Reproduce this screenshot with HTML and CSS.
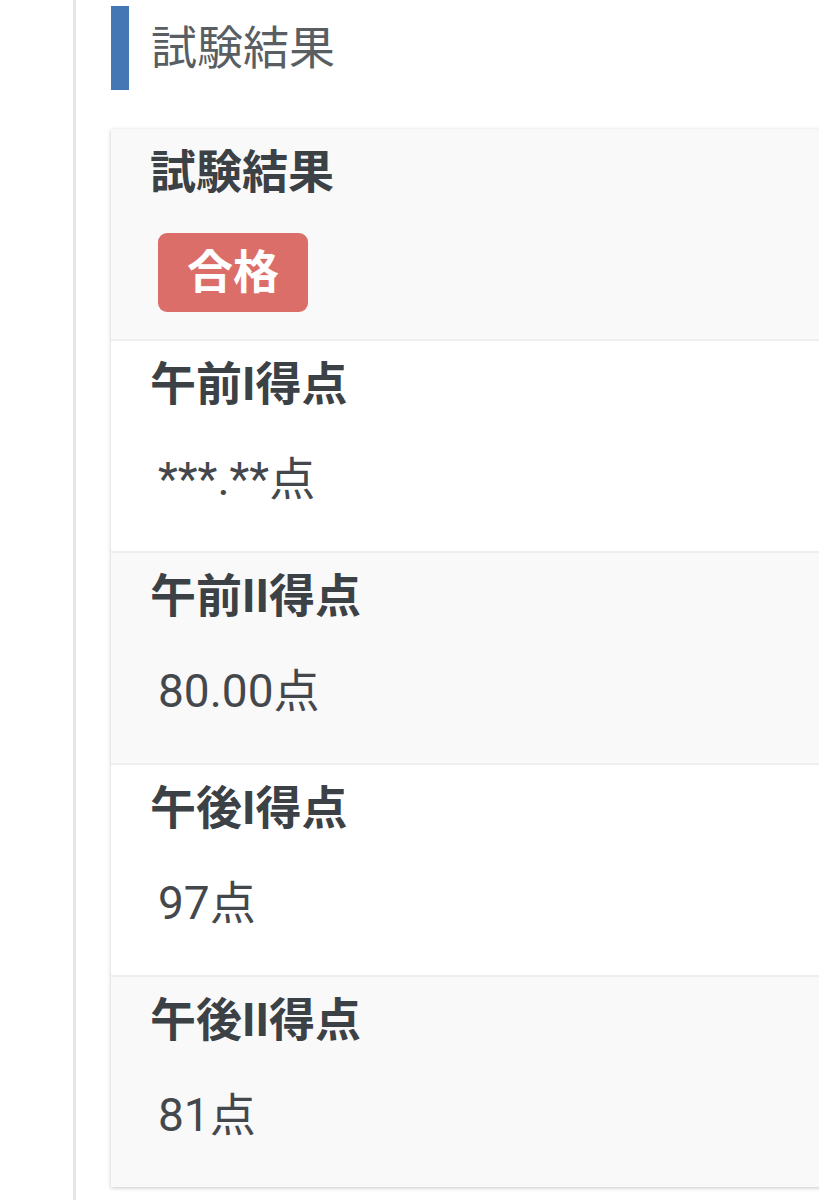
FILE: index.html
```html
<!DOCTYPE html>
<html lang="ja">
<head>
<meta charset="utf-8">
<title>試験結果</title>
<link rel="stylesheet" href="styles.css">
</head>
<body>
<div class="page">
  <div class="content">
    <h2 class="section-title">試験結果</h2>
    <div class="card">
      <div class="row odd">
        <div class="label">試験結果</div>
        <div class="value"><span class="badge">合格</span></div>
      </div>
      <div class="row">
        <div class="label">午前I得点</div>
        <div class="value">***.**点</div>
      </div>
      <div class="row odd">
        <div class="label">午前II得点</div>
        <div class="value">80.00点</div>
      </div>
      <div class="row">
        <div class="label">午後I得点</div>
        <div class="value">97点</div>
      </div>
      <div class="row odd">
        <div class="label">午後II得点</div>
        <div class="value">81点</div>
      </div>
    </div>
  </div>
</div>
</body>
</html>
```

FILE: styles.css
```css
html, body {
  margin: 0;
  padding: 0;
  background: #fff;
  overflow: hidden;
}
body {
  font-family: Roboto, "Noto Sans CJK JP", sans-serif;
  font-size: 46px;
  color: #3c4146;
}
.page {
  margin-left: 73px;
  border-left: 3px solid #e6e6e6;
  min-height: 1200px;
  overflow: hidden;
}
.content {
  padding-left: 35px;
  padding-top: 6px;
}
.section-title {
  margin: 0;
  display: flex;
  align-items: center;
  height: 84px;
  border-left: 18px solid #4477b3;
  padding-left: 22px;
  font-size: 46px;
  font-weight: 400;
  color: #595e63;
  line-height: 84px;
}
.card {
  margin-top: 39px;
  margin-right: -40px;
  box-shadow: 0 1px 4px rgba(0, 0, 0, 0.22);
  background: #fff;
}
.row {
  padding: 8px 39px 37px;
  border-bottom: 2px solid #eeeeee;
  background: #fff;
}
.row:last-child {
  border-bottom: none;
}
.row.odd {
  background: #f9f9f9;
}
.label {
  font-weight: 700;
  line-height: 70px;
}
.value {
  margin-top: 26px;
  padding-left: 8px;
  line-height: 69px;
  color: #44484c;
}
.badge {
  display: inline-block;
  height: 79px;
  line-height: 79px;
  padding: 0 29px;
  border-radius: 9px;
  background: #dc6e6a;
  color: #fff;
  font-weight: 700;
  vertical-align: top;
}
.row:first-child {
  padding-bottom: 27px;
}
.row:first-child .value {
  margin-top: 26px;
  line-height: 79px;
}
```
